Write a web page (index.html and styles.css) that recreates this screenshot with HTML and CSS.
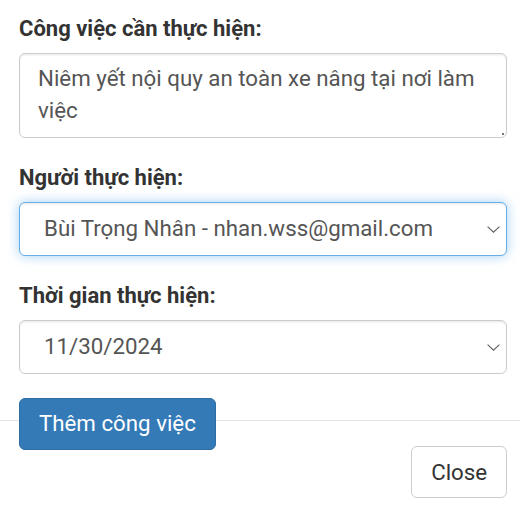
FILE: index.html
```html
<!DOCTYPE html>
<html lang="vi">
<head>
<meta charset="utf-8">
<link rel="stylesheet" href="styles.css">
</head>
<body>
<div class="modal">
  <div class="modal-body">
    <div class="form-group">
      <label class="control-label">Công việc cần thực hiện:</label>
      <div class="field">
        <textarea class="form-control textarea" rows="2">Niêm yết nội quy an toàn xe nâng tại nơi làm việc</textarea>
        <span class="grip"></span>
      </div>
    </div>
    <div class="form-group">
      <label class="control-label">Người thực hiện:</label>
      <div class="field">
        <select class="form-control select is-focused"><option>Bùi Trọng Nhân - nhan.wss@gmail.com</option></select>
        <svg class="chevron" width="13" height="7" viewBox="0 0 13 7"><path d="M0.6 0.6 L6.5 6.2 L12.4 0.6" fill="none" stroke="#666" stroke-width="1.2"/></svg>
      </div>
    </div>
    <div class="form-group">
      <label class="control-label">Thời gian thực hiện:</label>
      <div class="field">
        <select class="form-control select"><option>11/30/2024</option></select>
        <svg class="chevron" width="13" height="7" viewBox="0 0 13 7"><path d="M0.6 0.6 L6.5 6.2 L12.4 0.6" fill="none" stroke="#666" stroke-width="1.2"/></svg>
      </div>
    </div>
    <button class="btn btn-primary" type="button">Thêm công việc</button>
  </div>
  <div class="modal-footer">
    <button class="btn btn-default" type="button">Close</button>
  </div>
</div>
</body>
</html>
```
FILE: styles.css
```css
html, body {
  margin: 0;
  padding: 0;
  background: #fff;
}
body {
  font-family: Roboto, "Noto Sans", sans-serif;
  font-size: 22.3px;
  line-height: 31.4px;
  color: #333;
}
.modal-body {
  padding: 13px 13px 0 19px;
}
.form-group {
  margin-bottom: 24.5px;
}
.control-label {
  display: block;
  font-size: 22px;
  font-weight: 700;
  margin-bottom: 8.5px;
  color: #333;
}
.field {
  position: relative;
}
.form-control {
  display: block;
  box-sizing: border-box;
  width: 100%;
  margin: 0;
  font-family: inherit;
  font-size: 22.3px;
  line-height: 31.4px;
  color: #555;
  background: #fff;
  border: 1.5px solid #ccc;
  border-radius: 6px;
  box-shadow: inset 0 1.5px 1.5px rgba(0, 0, 0, .075);
  outline: none;
}
.textarea {
  height: 85px;
  padding: 9.4px 18px;
  resize: none;
  overflow: hidden;
}
.grip {
  position: absolute;
  right: 3px;
  bottom: 3px;
  width: 2px;
  height: 2px;
  background: #777;
}
.select {
  height: 53.4px;
  padding: 0 40px 0 24px;
  -webkit-appearance: none;
  appearance: none;
}
.is-focused {
  border-color: #66afe9;
  box-shadow: inset 0 1.5px 1.5px rgba(0, 0, 0, .075), 0 0 12px rgba(102, 175, 233, .6);
}
.chevron {
  position: absolute;
  right: 7px;
  top: 50%;
  margin-top: -3px;
  pointer-events: none;
}
.btn {
  display: inline-block;
  box-sizing: border-box;
  margin: 0;
  padding: 9.4px 18.9px;
  font-family: inherit;
  font-size: 22.3px;
  line-height: 31.4px;
  font-weight: 400;
  border: 1.5px solid transparent;
  border-radius: 6px;
  cursor: pointer;
}
.btn-primary {
  position: relative;
  z-index: 1;
  color: #fff;
  background: #337ab7;
  border-color: #2e6da4;
}
.btn-default {
  color: #333;
  background: #fff;
  border-color: #ccc;
}
.modal-footer {
  margin-top: -30px;
  padding: 25px 13px 24px 0;
  border-top: 1.5px solid #e5e5e5;
  text-align: right;
}
```
